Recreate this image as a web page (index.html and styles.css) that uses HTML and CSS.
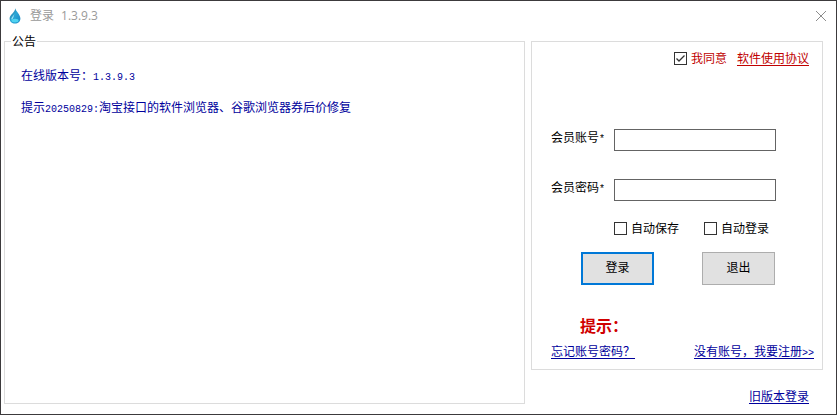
FILE: index.html
```html
<!DOCTYPE html>
<html lang="zh-CN">

    <head>
        <meta charset="UTF-8">
        <meta name="viewport" content="width=device-width, initial-scale=1.0">
        <title>登录</title>
        <link rel="stylesheet" href="styles.css">
    </head>

    <body>

        <header class="titlebar">
            <svg class="logo" viewBox="0 0 16 16" aria-hidden="true">
                <defs>
                    <linearGradient id="drop" x1="0" y1="0" x2="1" y2="1">
                        <stop offset="0" stop-color="#2a6f8c" />
                        <stop offset="0.45" stop-color="#2aa6d6" />
                        <stop offset="1" stop-color="#1788c4" />
                    </linearGradient>
                </defs>
                <path d="M8.4 0.3C8.8 3.6 13.4 6.4 13.4 10.6C13.4 13.7 11 15.6 8 15.6C5 15.6 2.6 13.7 2.6 10.6C2.6 7 7.8 4.6 8.4 0.3Z" fill="url(#drop)" />
                <path d="M7.4 5.5C6.8 8 4.2 9 4.4 11.4C5.6 12.2 6.6 9.6 7.4 5.5Z" fill="#9be3f5" />
                <ellipse cx="8" cy="12.6" rx="3.6" ry="1.9" fill="#4fd3f0" />
            </svg>
            <span class="title">登录</span>
            <span class="title">1.3.9.3</span>
            <button class="close" type="button" aria-label="关闭">
                <svg viewBox="0 0 12 12" width="12" height="12" aria-hidden="true">
                    <path d="M1 1L11 11M11 1L1 11" fill="none" stroke="#8c8c8c" stroke-width="1" />
                </svg>
            </button>
        </header>

        <main class="content">
            <fieldset class="notice">
                <legend>公告</legend>
                <p>在线版本号：<span class="latin">1.3.9.3</span></p>
                <p>提示<span class="latin">20250829:</span>淘宝接口的软件浏览器、谷歌浏览器券后价修复</p>
            </fieldset>

            <div class="side">
                <form class="login">
                    <div class="agree">
                        <label class="check"><input type="checkbox" checked>我同意</label>
                        <a href="#">软件使用协议</a>
                    </div>

                    <div class="fields">
                        <label for="account">会员账号<span class="latin">*</span></label>
                        <input class="textbox" type="text" id="account">
                        <label for="password">会员密码<span class="latin">*</span></label>
                        <input class="textbox" type="password" id="password">
                    </div>

                    <div class="options">
                        <label class="check"><input type="checkbox">自动保存</label>
                        <label class="check"><input type="checkbox">自动登录</label>
                    </div>

                    <div class="buttons">
                        <button class="btn btn-default" type="submit">登录</button>
                        <button class="btn" type="button">退出</button>
                    </div>

                    <p class="tip">提示：</p>

                    <div class="links">
                        <a href="#">忘记账号密码？</a>
                        <a href="#">没有账号，我要注册<span class="latin">&gt;&gt;</span></a>
                    </div>
                </form>

                <a class="old" href="#">旧版本登录</a>
            </div>
        </main>

    </body>

</html>
```

FILE: styles.css
```css
* {
    box-sizing: border-box;
}

body {
    display: flex;
    flex-direction: column;
    min-height: 100vh;
    margin: 0;
    border: 1px solid #3c3a3c;
    background-color: #fff;
    color: #000;
    font-family: "Noto Sans CJK SC", sans-serif;
    font-size: 12px;
    line-height: 16px;
}

p {
    margin: 0;
}

a {
    color: #00009c;
    text-underline-offset: 2px;
}

/* half-width characters, 6px each */
.latin {
    font-family: "Liberation Mono", monospace;
    font-size: 10px;
    line-height: 1;
}

.titlebar {
    display: flex;
    align-items: center;
    gap: 7px;
    height: 30px;
    padding: 0 9px 0 6px;
    color: #999;
}

.logo {
    width: 16px;
    height: 16px;
}

.title {
    font-family: "Open Sans", "Noto Sans CJK SC", sans-serif;
}

.close {
    display: flex;
    margin-left: auto;
    padding: 0;
    border: none;
    background: none;
}

.content {
    display: grid;
    grid-template-columns: 1fr 292px;
    gap: 6px;
    flex: 1;
    padding: 2px 13px 10px 3px;
}

.notice {
    min-width: 0;
    margin: 0;
    padding: 18px 16px;
    border: 1px solid #dcdcdc;
    color: #00009c;
}

.notice legend {
    margin-left: -10px;
    padding: 0 1px;
    color: #000;
}

.notice p {
    margin-bottom: 16px;
}

.side {
    display: flex;
    flex-direction: column;
    padding-top: 8px;
}

.login {
    padding: 8px 8px 10px 19px;
    border: 1px solid #dcdcdc;
}

.agree {
    display: flex;
    justify-content: flex-end;
    gap: 10px;
    padding-right: 5px;
    color: #c00000;
}

.agree a {
    color: #c00000;
}

.check {
    display: flex;
    align-items: center;
    gap: 4px;
}

.check input {
    appearance: none;
    width: 13px;
    height: 13px;
    margin: 0;
    border: 1px solid #333;
    background-color: #fff;
}

.check input:checked {
    background-image: url("data:image/svg+xml,%3Csvg xmlns='http://www.w3.org/2000/svg' viewBox='0 0 11 11'%3E%3Cpath d='M1.5 5.5L4 8L9.5 2.5' fill='none' stroke='%23333' stroke-width='1.3'/%3E%3C/svg%3E");
}

.fields {
    display: grid;
    grid-template-columns: 63px 162px;
    row-gap: 28px;
    margin-top: 63px;
}

.textbox {
    width: 100%;
    height: 22px;
    padding: 2px 4px;
    border: 1px solid #646464;
    font: inherit;
}

.options {
    display: flex;
    gap: 25px;
    margin: 19px 0 16px 63px;
}

.buttons {
    display: flex;
    gap: 48px;
    margin-left: 30px;
}

.btn {
    width: 73px;
    height: 33px;
    padding: 0 0 4px;
    border: 1px solid #adadad;
    background-color: #e1e1e1;
    color: #000;
    font: inherit;
}

.btn-default {
    border: 2px solid #0078d7;
}

.tip {
    margin: 30px 0 8px 29px;
    color: #d00000;
    font-size: 16px;
    font-weight: bold;
    line-height: 20px;
}

.links {
    display: flex;
    justify-content: space-between;
}

.old {
    align-self: flex-end;
    margin: auto 14px 0 0;
}
```
